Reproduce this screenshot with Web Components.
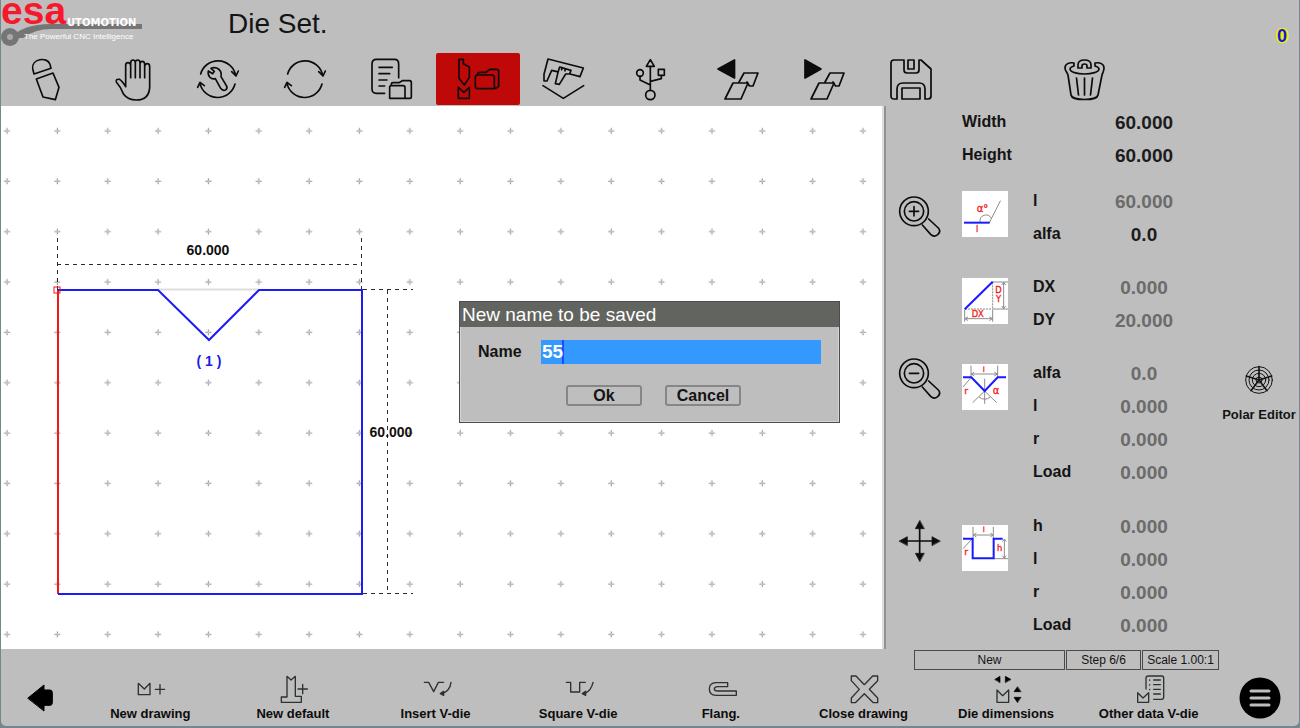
<!DOCTYPE html>
<html lang="en">
<head>
<meta charset="utf-8">
<meta name="viewport" content="width=device-width, initial-scale=1">
<title>Die Set.</title>
<style>
  html { background: #75878d; }
  body { margin: 0; font-family: "Liberation Sans", Arial, sans-serif; color: #141414; }
</style>
</head>
<body>
<die-app></die-app>

<script>
const svg = (box, w, h, body, sw = 5) =>
  `<svg viewBox="${box}" width="${w}" height="${h}" overflow="visible" fill="none" stroke="currentColor" stroke-width="${sw}" stroke-linejoin="round" stroke-linecap="round" aria-hidden="true">${body}</svg>`;
const tool = (x, y, body) => svg(`${x} ${y} 126 126`, 42, 42, body);
const small = (body) => svg('0 0 42 42', 42, 42, body, 1.7);
const foot = (x, y, body) => svg(`${x} ${y} 90 87`, 30, 29, body, 4);

const cycle = (cx) => `<path d="M${cx-51} 222A54 54 0 0 1 ${cx+54} 226M${cx+42} 215L${cx+55} 228L${cx+62} 213M${cx+52} 252A54 54 0 0 1 ${cx-53} 250M${cx-60} 262L${cx-53} 247L${cx-40} 257"/>`;
const sheets = '<path d="M22 24L27 15H41L36 28H32.500L30 24M16 25H31L24 41H8Z"/>';

const ICONS = {
  pencil: tool(73, 174, '<path d="M103 222L99 206C95 177 142 168 151 193L154 205ZM110 237L160 219L178 262L167 299L130 291Z"/>'),
  hand: tool(332, 174, '<path d="M376 260V196Q376 188 383 188T391 196V233M391 233V188Q391 180 398 180T405 188V233M405 188Q405 180 412 180T419 188V233M419 191Q420 184 426 184T433 192V233M433 200Q434 191 441 191T448 200V262Q446 300 408 300Q382 300 370 283Q362 262 348 246Q346 236 357 238Q364 241 376 260"/>'),
  service: tool(592, 174, cycle(654) + '<path d="M634 205L644 214L639 221L626 213C623 228 634 240 647 236L663 265Q670 275 679 269Q685 263 679 255L664 230C668 211 652 198 634 205Z"/>'),
  cycle: tool(852, 174, cycle(914)),
  report: tool(91, 39, '<path d="M135 145H110Q97 145 97 132V57Q97 43 110 43H165Q177 43 177 57V98M118 67H158M118 86H150M118 105H142M118 123H135M150 127Q150 122 155 122H190Q196 122 196 128V160H150ZM155 120V117Q155 113 160 113H178L188 107H210Q215 107 215 113V155Q215 160 210 160H196"/>'),
  dieset: tool(351, 39, '<path d="M357 43H370V56L388 66V97L373 120L357 100ZM355 127L372 142L388 127V160H355ZM413 90H455Q463 90 463 97V131H413Q406 131 406 124V97Q406 90 413 90ZM412 88Q413 82 420 82H438L449 73H470Q476 73 476 80V122Q475 129 464 130"/>'),
  caliper: tool(611, 39, '<path d="M626 42L732 69L722 95L692 87M626 42L614 88V108H623L637 76L653 80M648 116L656 82L661 66L695 76L691 87H679L660 118ZM667 68V74M677 72V78M611 122L672 160L733 122"/>'),
  usb: tool(870, 39, '<path d="M931 64V136M931 44L919 64H943ZM900 94V105L931 120M964 92V101L931 109"/><circle cx="931" cy="150" r="14"/><circle cx="900" cy="84" r="10"/><path d="M955 73H973V91H955Z"/>'),
  prev: small('<path d="M1 11L17.500 2V20Z" fill="currentColor"/>' + sheets),
  next: small('<path d="M18 11L2 2V20Z" fill="currentColor"/>' + sheets),
  save: small('<path d="M4 2H14V12Q14 15 17 15H26Q29 15 29 12V2H31L41 11V38Q41 41 38 41H35V31Q35 25 29 25H13Q7 25 7 31V41H4Q1 41 1 38V5Q1 2 4 2ZM18 2H24V11H18ZM12 30H30V41H12Z"/>'),
  trash: small('<path d="M11 5C6 4 2 6 2 10C2 13 4 14 5 17L8 37C9 43 34 43 35 37L39 17C40 14 41 13 41 10C41 6 37 4 32 5M11 5V8C8 9 7 10 7 11C7 14 14 16 21.500 16S36 14 36 11C36 10 35 9 32 8V5M15 10H19V8Q19 6 21.500 6T24 8V10H28V7Q28 2 21.500 2T15 7ZM13.500 20L15.500 37M21.500 20V37M29.500 20L27.500 37"/>'),
  zoomIn: tool(57, 255, '<circle cx="102" cy="301" r="43"/><circle cx="102" cy="301" r="29"/><path d="M88 301H116M102 287V315M127 342L152 370Q162 380 173 371Q184 361 175 351L146 324"/>'),
  zoomOut: tool(57, 255, '<circle cx="102" cy="301" r="43"/><circle cx="102" cy="301" r="29"/><path d="M88 301H116M127 342L152 370Q162 380 173 371Q184 361 175 351L146 324"/>'),
  move: tool(57, 60, '<path d="M119 80V165M75 123H163"/><path d="M119 62L106 86H132ZM119 184L106 160H132ZM58 123L82 110V136ZM180 123L156 110V136Z" fill="currentColor" stroke-width="2"/>'),
  polar: svg('0 0 84 84', 28, 28, '<circle cx="42" cy="42" r="40"/><circle cx="42" cy="42" r="30"/><circle cx="42" cy="42" r="20"/><circle cx="42" cy="42" r="9"/><path d="M42 2V42L4 30M42 42L80 30M42 42L18 74M42 42L66 74" stroke-width="5"/>', 3),
  newDrawing: foot(405, 101, '<path d="M415 126V160H450V126L433 143ZM466 144H494M480 130V158"/>'),
  newDefault: foot(833, 101, '<path d="M843 183V167H860V105L872 116L885 105V165H903V183ZM893 143H921M907 129V157"/>'),
  vdie: foot(1260, 101, '<path d="M1270 123H1283L1298 151L1312 123H1328M1350 123Q1347 148 1324 157"/><path d="M1318 157L1328 150V162Z" fill="currentColor"/>'),
  squareDie: foot(308, 101, '<path d="M318 123H331V152H358V123H375M398 123Q393 148 372 157"/><path d="M366 157L376 150V162Z" fill="currentColor"/>'),
  flange: foot(735, 101, '<path d="M800 124H765Q745 125 745 143Q745 162 765 162H826V149H770Q760 149 760 143T770 136H800Z"/>'),
  close: foot(1164, 101, '<path d="M1174 104H1188L1213 130L1238 104H1253V118L1228 144L1253 170V184H1240L1213 157L1186 184H1174V170L1198 144L1174 118Z"/>'),
  dims: foot(330, 521, '<path d="M348 566V603H383V566L365 583Z"/><path d="M342 534L357 525V543ZM389 534L373 525V543ZM409 557L399 571H419ZM409 603L399 588H419Z" fill="#000" stroke="#000" stroke-width="2"/>'),
  other: foot(759, 521, '<path d="M795 563V530Q795 524 802 524H842Q848 524 848 530V588Q848 594 842 594H818M818 536H838M818 550H838M818 564H838M818 578H838M770 574V603H803V574L786 590ZM806 536V537M806 550V551M806 564V565"/>'),
};

const thumb = (body) => svg('0 0 138 138', 46, 46, `<rect width="138" height="138" fill="#fff" stroke="none"/>${body}`, 3);
const BLUE = 'stroke="#1a1aff" stroke-width="6" stroke-linecap="butt" stroke-linejoin="miter"';
const GREY = 'stroke="#8c8c8c" stroke-width="3"';
const RED = 'fill="#f21d1d" stroke="#f21d1d" stroke-width="1" font-family="DejaVu Sans, sans-serif"';
const THUMBS = {
  angle: thumb(`<path ${GREY} d="M82 95L115 30M54 92A18 18 0 0 1 88 82"/><path ${BLUE} d="M6 95H83"/><text ${RED} x="44" y="63" font-size="30">α°</text><text ${RED} x="42" y="122" font-size="24">l</text>`),
  delta: thumb(`<path ${GREY} d="M92 12H137M92 93H137M125 14V91M120 20L125 13L130 20M120 85L125 92L130 85M8 96V130M92 96V130M10 122H90M17 117L9 122L17 127M83 117L91 122L83 127"/><path ${GREY} stroke-dasharray="4 5" d="M92 14V93M10 93H90"/><path ${BLUE} d="M8 94L92 11"/><text ${RED} x="100" y="46" font-size="25">D</text><text ${RED} x="102" y="72" font-size="25">Y</text><text ${RED} x="29" y="117" font-size="25">DX</text>`),
  vdie: thumb(`<path ${GREY} d="M27 6V40M107 6V40M29 30H105M36 25L28 30L36 35M98 25L106 30L98 35M68 45V118M68 81L33 115M68 81L103 115M52 100Q68 112 84 100M4 68L26 42"/><path ${BLUE} d="M3 40H28L68 81L107 40H132"/><text ${RED} x="62" y="23" font-size="22">l</text><text ${RED} x="7" y="91" font-size="28">r</text><text ${RED} x="92" y="91" font-size="30">α</text>`),
  square: thumb(`<path ${GREY} d="M33 7V40M94 7V40M35 30H92M42 25L34 30L42 35M86 25L93 30L86 35M95 101H137M127 43V99M122 49L127 42L132 49M122 93L127 100L132 93M4 70L28 44"/><path ${BLUE} d="M3 41H32V100H95V41H122"/><text ${RED} x="62" y="22" font-size="22">l</text><text ${RED} x="7" y="90" font-size="28">r</text><text ${RED} x="105" y="78" font-size="25">h</text>`),
};

function define(name, render) {
  customElements.define(name, class extends HTMLElement {
    connectedCallback() {
      if (this.shadowRoot) return;
      const t = document.createElement('template');
      t.innerHTML = render(this);
      this.attachShadow({ mode: 'open' }).append(t.content.cloneNode(true));
    }
  });
}

/* Company logo with its tagline */
define('brand-logo', () => `
<style>:host{display:block} svg{display:block;overflow:visible}</style>
<svg viewBox="0 0 144 48" width="144" height="48" role="img" aria-label="esa automotion">
  <path d="M9 38Q22 24 50 24H141V29H50Q34 29 22 38Z" fill="#757575"/>
  <circle cx="9" cy="37" r="9" fill="#757575"/><circle cx="9" cy="37" r="3" fill="#aaa"/>
  <text x="0" y="24" font-family="Liberation Sans, Arial, sans-serif" font-weight="700" font-size="39" fill="#f8182c">esa</text>
  <text x="66" y="26" font-family="DejaVu Sans, sans-serif" font-weight="700" font-size="10" fill="#fff">UTOMOTION</text>
  <text x="23" y="39" font-family="Liberation Sans, Arial, sans-serif" font-size="8" fill="#fff">The Powerful CNC Intelligence</text>
</svg>`);

define('app-header', () => `
<style>
  :host{display:flex;height:50px;box-sizing:border-box;padding-right:12px}
  h1{flex:1;margin:0 0 0 83px;font-weight:400;font-size:28px;line-height:48px}
  output{align-self:flex-end;font-weight:700;font-size:18px;line-height:28px;color:#1414e6;
    text-shadow:1px 0 #ee0,-1px 0 #ee0,0 1px #ee0,0 -1px #ee0,2px 0 #ee0,-2px 0 #ee0,1px 1px #ee0,-1px -1px #ee0,1px -1px #ee0,-1px 1px #ee0}
</style>
<brand-logo></brand-logo><h1><slot></slot></h1><output>0</output>`);

define('tool-button', (el) => `
<style>
  :host{display:block}
  button{display:flex;align-items:center;justify-content:center;width:100%;height:52px;padding:0;border:0;border-radius:2px;background:none;color:#0c0c0c}
  :host([selected]) button{background:#bf0808}
  svg{display:block}
</style>
<button type="button" aria-label="${el.getAttribute('label')}">${ICONS[el.getAttribute('icon')]}</button>`);

define('tool-strip', () => `
<style>
  :host{display:grid;grid-template-columns:repeat(15,minmax(0,1fr));column-gap:2px;padding:3px 0 1px 2px}
  .far{grid-column:13}
</style>
<tool-button icon="pencil" label="Edit"></tool-button>
<tool-button icon="hand" label="Manual"></tool-button>
<tool-button icon="service" label="Semi-automatic"></tool-button>
<tool-button icon="cycle" label="Automatic"></tool-button>
<tool-button icon="report" label="Programs"></tool-button>
<tool-button icon="dieset" label="Punches and dies" selected></tool-button>
<tool-button icon="caliper" label="Measures"></tool-button>
<tool-button icon="usb" label="USB"></tool-button>
<tool-button icon="prev" label="Previous"></tool-button>
<tool-button icon="next" label="Next"></tool-button>
<tool-button icon="save" label="Save"></tool-button>
<tool-button class="far" icon="trash" label="Delete"></tool-button>`);

/* Die profile on a dotted grid, with its dimensions */
define('die-drawing', () => `
<style>
  :host{display:block;overflow:hidden;position:relative;background:#fff;border-right:2px solid #929292;box-shadow:inset -2px 0 #dcdcdc}
  svg{display:block}
  text{font-weight:700;font-size:14px;font-family:"Liberation Sans",Arial,sans-serif}
</style>
<svg width="879" height="543" fill="none">
  <defs><pattern id="g" x="-19" y="0" width="50.35" height="50.35" patternUnits="userSpaceOnUse">
    <path d="M22 25H28M25 22V28" stroke="#8a8a8a"/><path d="M24.500 25H25.500" stroke="#fff"/></pattern></defs>
  <rect width="879" height="543" fill="url(#g)"/>
  <path d="M157 183.500H258" stroke="#ddd" stroke-width="2"/>
  <path d="M56.500 132V184M360.500 132V184M56 158.500H360M362 183.500H412M386.500 184V487M362 487.500H412" stroke="#2b2b2b" stroke-dasharray="4 4"/>
  <path d="M57 184V488" stroke="#f01818" stroke-width="2"/>
  <path d="M57 184H157L208 234L258 184H361V488H57" stroke="#1c1cf5" stroke-width="2"/>
  <rect x="53" y="181" width="6" height="6" stroke="#f01818"/>
  <text x="207" y="149" text-anchor="middle" fill="#111">60.000</text>
  <text x="390" y="331" text-anchor="middle" fill="#111">60.000</text>
  <text x="208" y="260" text-anchor="middle" fill="#1c1ce6">( 1 )</text>
</svg>
<slot></slot>`);

define('save-dialog', () => `
<style>
  :host{display:block;position:absolute;left:458px;top:195px;width:381px;box-sizing:border-box;background:#bebebe;border:1px solid #4c4c4c;box-shadow:inset 0 0 0 1px #d4d4d4}
  h2{margin:0;padding:0 2px;background:#62645f;color:#fff;font-weight:400;font-size:19px;line-height:25px}
  form{padding:13px 18px 16px}
  .field{display:grid;grid-template-columns:63px 1fr;align-items:center}
  label{font-weight:700;font-size:16px;line-height:20px}
  input{width:100%;box-sizing:border-box;height:24px;border:0;border-radius:0;padding:0 1px;font:700 19px "Liberation Sans",Arial,sans-serif;color:#fff;background:linear-gradient(#2346ff,#2346ff) 21px 0/2px 100% no-repeat #3399ff}
  .actions{display:flex;gap:23px;padding:21px 0 0 88px}
  button{width:76px;height:21px;padding:0;border:2px solid #868686;border-radius:3px;background:#bebebe;color:#141414;font:700 16px/16px "Liberation Sans",Arial,sans-serif}
</style>
<h2>New name to be saved</h2>
<form>
  <div class="field"><label for="name">Name</label><input id="name" type="text" value="55"></div>
  <div class="actions"><button type="button">Ok</button><button type="button">Cancel</button></div>
</form>`);

/* One block of parameters; data-rows holds "label=value" pairs, a * marks an active value */
define('param-group', (el) => {
  const rows = el.dataset.rows.split(';').map((r, i) => {
    const [k, v] = r.split('=');
    return `<label for="v${i}">${k}</label><output id="v${i}" class="${v.endsWith('*') ? 'on' : ''}">${v.replace('*', '')}</output>`;
  }).join('');
  return `
<style>
  :host{display:grid;grid-template-columns:71px 1fr;align-items:start}
  .pic{padding-top:var(--pic-top,8px);height:46px}
  svg{display:block}
  .rows{display:grid;grid-template-columns:71px 80px;grid-auto-rows:33px;align-items:center}
  :host([plain]){display:block}
  :host([plain]) .rows{grid-template-columns:142px 80px}
  label{font-weight:700;font-size:16px;line-height:20px}
  output{text-align:center;font-weight:700;font-size:19px;line-height:20px;color:#6b6b6b;padding-top:2px}
  .on{color:#1c1c1c}
</style>
${el.dataset.pic ? `<div class="pic">${THUMBS[el.dataset.pic]}</div>` : ''}<div class="rows">${rows}</div>`;
});

define('view-tools', () => `
<style>
  :host{display:flex;flex-direction:column;gap:120px;padding-top:90px}
  button{display:block;width:42px;height:42px;padding:0;border:0;background:none;color:#0c0c0c}
  svg{display:block}
</style>
<button type="button" aria-label="Zoom in">${ICONS.zoomIn}</button>
<button type="button" aria-label="Zoom out">${ICONS.zoomOut}</button>
<button type="button" aria-label="Move">${ICONS.move}</button>`);

define('polar-button', () => `
<style>
  :host{display:block;padding-top:260px}
  button{display:flex;flex-direction:column;align-items:center;gap:13px;width:100%;padding:0;border:0;background:none;color:#141414;font:700 13px/16px "Liberation Sans",Arial,sans-serif;white-space:nowrap}
</style>
<button type="button">${ICONS.polar}<span>Polar Editor</span></button>`);

define('status-line', () => `
<style>
  :host{display:grid;grid-template-columns:152px 76px 78px;justify-content:start;font-size:12px;line-height:18px}
  span{border:1px solid #4a4a4a;text-align:center;margin-right:1px;white-space:nowrap}
</style>
<span>New</span><span>Step 6/6</span><span>Scale 1.00:1</span>`);

define('side-panel', () => `
<style>
  :host{display:grid;grid-template-columns:42px 222px 80px;column-gap:21px;padding-left:13px;grid-template-rows:1fr auto}
  .groups{display:flex;flex-direction:column;gap:20px;margin-top:-1px}
  .first{margin-bottom:-7px}
  .angle{--pic-top:7px}
  .last{--pic-top:16px;margin-top:1px}
  polar-button{margin-left:14px;width:80px}
  status-line{grid-column:1 / -1;padding-left:15px}
</style>
<view-tools></view-tools>
<div class="groups">
  <param-group class="first" plain data-rows="Width=60.000*;Height=60.000*"></param-group>
  <param-group class="angle" data-pic="angle" data-rows="l=60.000;alfa=0.0*"></param-group>
  <param-group data-pic="delta" data-rows="DX=0.000;DY=20.000"></param-group>
  <param-group data-pic="vdie" data-rows="alfa=0.0;l=0.000;r=0.000;Load=0.000"></param-group>
  <param-group class="last" data-pic="square" data-rows="h=0.000;l=0.000;r=0.000;Load=0.000"></param-group>
</div>
<polar-button></polar-button>
<status-line></status-line>`);

define('command-button', (el) => `
<style>
  :host{display:block}
  button{display:flex;flex-direction:column;align-items:center;gap:2px;width:100%;padding:0;border:0;background:none;color:#0c0c0c;font:700 13px/16px "Liberation Sans",Arial,sans-serif;white-space:nowrap}
  svg{display:block;color:#2c322c}
</style>
<button type="button">${ICONS[el.getAttribute('icon')]}<span><slot></slot></span></button>`);

define('command-bar', () => `
<style>
  :host{display:grid;grid-template-columns:78px repeat(8,minmax(0,1fr)) 79px;align-items:center;height:56px}
  .round{display:flex;justify-content:center;padding:0;border:0;background:none;color:#000}
  svg{display:block}
</style>
<button class="round" type="button" aria-label="Back">${svg('78 134 78 84', 26, 28, '<path d="M81 176L129 137V152H147Q154 152 154 160V190Q154 198 147 198H129V214Z" fill="currentColor"/>', 3)}</button>
<command-button icon="newDrawing">New drawing</command-button>
<command-button icon="newDefault">New default</command-button>
<command-button icon="vdie">Insert V-die</command-button>
<command-button icon="squareDie">Square V-die</command-button>
<command-button icon="flange">Flang.</command-button>
<command-button icon="close">Close drawing</command-button>
<command-button icon="dims">Die dimensions</command-button>
<command-button icon="other">Other data V-die</command-button>
<button class="round" type="button" aria-label="Menu">${svg('0 0 42 42', 42, 42, '<circle cx="21" cy="21" r="20.500" fill="#000" stroke="none"/><path d="M12 14H30M12 21H30M12 28H30" stroke="#bebebe" stroke-linecap="round"/>', 3)}</button>`);

define('die-app', () => `
<style>
  :host{display:block;padding:0 1px 2px;box-sizing:border-box;min-height:100vh}
  .frame{background:#bebebe;border-radius:0 0 5px 5px;overflow:hidden}
  main{display:grid;grid-template-columns:minmax(0,1fr) 413px;min-height:564px}
  die-drawing{margin-bottom:21px}
</style>
<div class="frame">
  <app-header>Die Set.</app-header>
  <tool-strip></tool-strip>
  <main>
    <die-drawing><save-dialog></save-dialog></die-drawing>
    <side-panel></side-panel>
  </main>
  <command-bar></command-bar>
</div>`);
</script>
</body>
</html>
